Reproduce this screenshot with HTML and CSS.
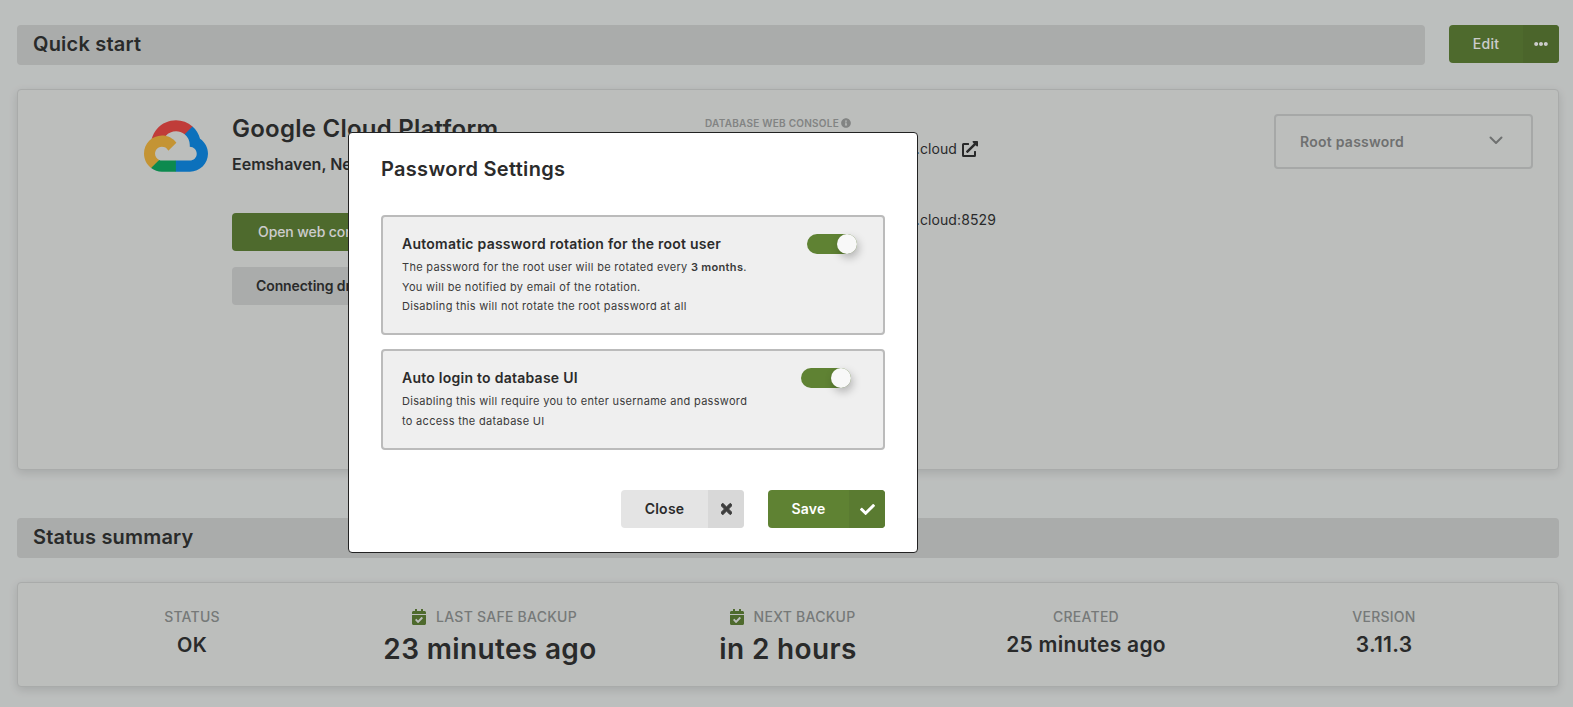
FILE: index.html
```html
<!DOCTYPE html>
<html lang="en">
<head>
    <meta charset="UTF-8">
    <meta name="viewport" content="width=device-width, initial-scale=1.0">
    <title>Deployment overview</title>
    <link rel="stylesheet" href="styles.css">
</head>
<body>
    <div class="page">
        <!-- Quick start -->
        <div class="section-row">
            <h2 class="section-title">Quick start</h2>
            <div class="btn-group btn-green top-action">
                <span class="btn-label">Edit</span>
                <span class="btn-icon">
                    <svg class="icon-dots" viewBox="0 0 512 512"><path d="M328 256c0 39.8-32.2 72-72 72s-72-32.2-72-72 32.2-72 72-72 72 32.2 72 72zm104-72c-39.8 0-72 32.2-72 72s32.2 72 72 72 72-32.2 72-72-32.2-72-72-72zm-352 0c-39.8 0-72 32.2-72 72s32.2 72 72 72 72-32.2 72-72-32.2-72-72-72z"/></svg>
                </span>
            </div>
        </div>

        <div class="card quick-card">
            <svg class="cloud-logo" viewBox="0 0 256 206">
                <path fill="#f04c48" d="M170.25 56.82l22.25-22.25 1.48-9.37C153.44-11.68 88.98-7.5 52.42 33.92 42.27 45.42 34.73 59.76 30.72 74.57l7.97-1.12 44.5-7.34 3.44-3.51c19.8-21.74 53.27-24.67 76.13-6.17l7.49.39z"/>
                <path fill="#0f8eec" d="M224.2 73.92c-5.11-18.84-15.61-35.77-30.22-48.72l-31.23 31.23c13.19 10.78 20.7 27.01 20.38 44.04v5.54c15.35 0 27.8 12.45 27.8 27.8 0 15.35-12.45 27.49-27.8 27.49h-55.67l-5.46 5.93v33.34l5.46 5.23h55.67c39.93.31 72.55-31.5 72.86-71.42.19-24.2-11.74-46.89-31.79-60.46"/>
                <path fill="#10ad63" d="M71.87 205.8h55.59v-44.51H71.87c-3.96 0-7.8-.85-11.4-2.5l-7.89 2.42-22.41 22.25-1.95 7.58c12.57 9.49 27.9 14.82 43.65 14.76"/>
                <path fill="#f5b941" d="M71.87 61.43C31.94 61.66-.23 94.22.01 134.15c.13 22.3 10.55 43.29 28.21 56.89l32.25-32.25c-13.99-6.32-20.21-22.79-13.89-36.78 6.32-13.99 22.79-20.21 36.78-13.89 6.16 2.78 11.1 7.72 13.88 13.89l32.25-32.25C115.77 71.83 94.45 61.34 71.87 61.43"/>
            </svg>
            <div class="provider">
                <h3 class="provider-name">Google Cloud Platform</h3>
                <div class="provider-region">Eemshaven, Netherlands</div>
                <div class="provider-actions">
                    <div class="btn btn-green-dim">Open web console</div>
                    <div class="btn btn-grey-dim">Connecting drivers</div>
                </div>
            </div>
            <div class="endpoints">
                <div class="field-label">
                    DATABASE WEB CONSOLE
                    <svg class="icon-info" viewBox="0 0 512 512"><path d="M256 8C119.043 8 8 119.083 8 256c0 136.997 111.043 248 248 248s248-111.003 248-248C504 119.083 392.957 8 256 8zm0 110c23.196 0 42 18.804 42 42s-18.804 42-42 42-42-18.804-42-42 18.804-42 42-42zm56 254c0 6.627-5.373 12-12 12h-88c-6.627 0-12-5.373-12-12v-24c0-6.627 5.373-12 12-12h12v-64h-12c-6.627 0-12-5.373-12-12v-24c0-6.627 5.373-12 12-12h64c6.627 0 12 5.373 12 12v100h12c6.627 0 12 5.373 12 12v24z"/></svg>
                </div>
                <div class="field-value">
                    https://5c7e2f9a1d04.arangodb.cloud
                    <svg class="icon-link" viewBox="0 0 512 512"><path d="M432 320h-32a16 16 0 0 0-16 16v112H64V128h144a16 16 0 0 0 16-16V80a16 16 0 0 0-16-16H48a48 48 0 0 0-48 48v352a48 48 0 0 0 48 48h352a48 48 0 0 0 48-48V336a16 16 0 0 0-16-16zM488 0H360c-21.37 0-32.05 25.91-17 41l35.73 35.73L135 320.37a24 24 0 0 0 0 34L157.67 377a24 24 0 0 0 34 0l243.61-243.68L471 169c15 15 41 4.5 41-17V24a24 24 0 0 0-24-24z"/></svg>
                </div>
                <div class="field-label field-gap">DATABASE ENDPOINT</div>
                <div class="field-value">https://5c7e2f9a1d04.arangodb.cloud:8529</div>
            </div>
            <div class="select-box">
                <span>Root password</span>
                <svg class="icon-chevron" viewBox="0 0 14 9"><polyline points="1.5,1.5 7,7 12.5,1.5"/></svg>
            </div>
        </div>

        <!-- Status summary -->
        <div class="section-row status-row">
            <h2 class="section-title">Status summary</h2>
        </div>

        <div class="card status-card">
            <div class="stat">
                <div class="stat-label">Status</div>
                <div class="stat-value">OK</div>
            </div>
            <div class="stat">
                <div class="stat-label stat-label-icon">
                    <svg class="icon-cal" viewBox="0 0 448 512"><path d="M436 160H12c-6.6 0-12-5.4-12-12v-36c0-26.5 21.5-48 48-48h48V12c0-6.6 5.4-12 12-12h40c6.6 0 12 5.4 12 12v52h128V12c0-6.6 5.4-12 12-12h40c6.6 0 12 5.4 12 12v52h48c26.5 0 48 21.5 48 48v36c0 6.6-5.4 12-12 12zM12 192h424c6.6 0 12 5.4 12 12v260c0 26.5-21.5 48-48 48H48c-26.5 0-48-21.5-48-48V204c0-6.6 5.4-12 12-12zm333.3 95.9l-28.2-28.4c-4.7-4.7-12.2-4.7-17-.1L194.3 364.7l-45.8-46.2c-4.7-4.7-12.2-4.7-17-.1l-28.4 28.2c-4.7 4.7-4.7 12.2-.1 17l82.6 83.2c4.7 4.7 12.2 4.7 17 .1l141.6-140.8c4.7-4.7 4.7-12.3.1-17z"/></svg>
                    Last safe backup
                </div>
                <div class="stat-value stat-large">23 minutes ago</div>
            </div>
            <div class="stat">
                <div class="stat-label stat-label-icon">
                    <svg class="icon-cal" viewBox="0 0 448 512"><path d="M436 160H12c-6.6 0-12-5.4-12-12v-36c0-26.5 21.5-48 48-48h48V12c0-6.6 5.4-12 12-12h40c6.6 0 12 5.4 12 12v52h128V12c0-6.6 5.4-12 12-12h40c6.6 0 12 5.4 12 12v52h48c26.5 0 48 21.5 48 48v36c0 6.6-5.4 12-12 12zM12 192h424c6.6 0 12 5.4 12 12v260c0 26.5-21.5 48-48 48H48c-26.5 0-48-21.5-48-48V204c0-6.6 5.4-12 12-12zm333.3 95.9l-28.2-28.4c-4.7-4.7-12.2-4.7-17-.1L194.3 364.7l-45.8-46.2c-4.7-4.7-12.2-4.7-17-.1l-28.4 28.2c-4.7 4.7-4.7 12.2-.1 17l82.6 83.2c4.7 4.7 12.2 4.7 17 .1l141.6-140.8c4.7-4.7 4.7-12.3.1-17z"/></svg>
                    Next backup
                </div>
                <div class="stat-value stat-large">in 2 hours</div>
            </div>
            <div class="stat">
                <div class="stat-label">Created</div>
                <div class="stat-value stat-medium">25 minutes ago</div>
            </div>
            <div class="stat">
                <div class="stat-label">Version</div>
                <div class="stat-value stat-medium">3.11.3</div>
            </div>
        </div>
    </div>

    <!-- Password settings dialog -->
    <div class="overlay">
        <div class="modal">
            <h2 class="modal-title">Password Settings</h2>

            <div class="option">
                <div class="option-text">
                    <div class="option-title">Automatic password rotation for the root user</div>
                    <p>The password for the root user will be rotated every <strong>3 months</strong>.</p>
                    <p>You will be notified by email of the rotation.</p>
                    <p>Disabling this will not rotate the root password at all</p>
                </div>
                <div class="toggle"><span class="thumb"></span></div>
            </div>

            <div class="option option-second">
                <div class="option-text">
                    <div class="option-title">Auto login to database UI</div>
                    <p>Disabling this will require you to enter username and password</p>
                    <p>to access the database UI</p>
                </div>
                <div class="toggle toggle-second"><span class="thumb"></span></div>
            </div>

            <div class="modal-actions">
                <div class="btn-group btn-light btn-close">
                    <span class="btn-label">Close</span>
                    <span class="btn-icon">
                        <svg class="icon-times" viewBox="0 0 352 512"><path d="M242.72 256l100.07-100.07c12.28-12.28 12.28-32.19 0-44.48l-22.24-22.24c-12.28-12.28-32.19-12.28-44.48 0L176 189.28 75.93 89.21c-12.28-12.28-32.19-12.28-44.48 0L9.21 111.45c-12.28 12.28-12.28 32.19 0 44.48L109.28 256 9.21 356.07c-12.28 12.28-12.28 32.19 0 44.48l22.24 22.24c12.28 12.28 32.2 12.28 44.48 0L176 322.72l100.07 100.07c12.28 12.28 32.2 12.28 44.48 0l22.24-22.24c12.28-12.28 12.28-32.19 0-44.48L242.72 256z"/></svg>
                    </span>
                </div>
                <div class="btn-group btn-save">
                    <span class="btn-label">Save</span>
                    <span class="btn-icon">
                        <svg class="icon-check" viewBox="0 0 512 512"><path d="M173.898 439.404l-166.4-166.4c-9.997-9.997-9.997-26.206 0-36.204l36.203-36.204c9.997-9.998 26.207-9.998 36.204 0L192 312.69 432.095 72.596c9.997-9.997 26.207-9.997 36.204 0l36.203 36.204c9.997 9.997 9.997 26.206 0 36.204l-294.4 294.401c-9.998 9.997-26.207 9.997-36.204-.001z"/></svg>
                    </span>
                </div>
            </div>
        </div>
    </div>
</body>
</html>
```

FILE: styles.css
```css
* {
    box-sizing: border-box;
}
html, body {
    margin: 0;
    height: 100%;
    overflow: hidden;
}
body {
    font-family: Inter, "Liberation Sans", sans-serif;
    letter-spacing: 0.25px;
    color: #343535;
    background-color: #ecefee;
}
svg {
    fill: currentColor;
    display: block;
}
.page {
    padding: 25px 14px 0 17px;
}

/* section headers */
.section-row {
    display: flex;
    gap: 24px;
    align-items: flex-start;
}
.status-row {
    margin-top: 48px;
}
.section-title {
    flex: 1;
    height: 40px;
    margin: 0;
    padding: 0 16px;
    line-height: 38px;
    font-size: 20px;
    font-weight: 600;
    letter-spacing: 0.2px;
    background-color: #d5d7d6;
    border-radius: 4px;
}

/* split buttons */
.btn-group {
    display: flex;
    height: 38px;
    border-radius: 4px;
    overflow: hidden;
    font-size: 14px;
    font-weight: 600;
    line-height: 38px;
    text-align: center;
}
.btn-label {
    flex: 1;
}
.btn-icon {
    display: flex;
    align-items: center;
    justify-content: center;
}
.btn-green {
    width: 110px;
    color: #fff;
    background-color: #628539;
}
.btn-green .btn-label {
    font-weight: 500;
}
.btn-green .btn-icon {
    width: 36px;
    background-color: #5e7f36;
}
.icon-dots {
    width: 14px;
    height: 14px;
}

/* cards */
.card {
    background-color: #ebeeec;
    border: 1px solid #d4d6d5;
    border-radius: 4px;
    box-shadow: 0 3px 10px rgba(0, 0, 0, 0.12);
}
.quick-card {
    display: grid;
    grid-template-columns: 88px 473px 1fr 259px;
    height: 381px;
    margin-top: 24px;
    padding: 24px 25px 0 126px;
}
.cloud-logo {
    width: 64px;
    height: 52px;
    margin-top: 6px;
}
.provider-name {
    margin: -1px 0 0;
    font-size: 24px;
    font-weight: 600;
    line-height: 32px;
}
.provider-region {
    margin-top: 8px;
    font-size: 16px;
    font-weight: 600;
    line-height: 22px;
    letter-spacing: 0;
}
.provider-actions {
    display: flex;
    flex-direction: column;
    align-items: flex-start;
    gap: 16px;
    margin-top: 38px;
}
.btn {
    height: 38px;
    padding: 0 26px;
    font-size: 14px;
    line-height: 38px;
    letter-spacing: -0.1px;
    border-radius: 4px;
}
.btn-green-dim {
    color: #fff;
    font-weight: 500;
    background-color: #628539;
}
.btn-grey-dim {
    padding: 0 24px;
    font-weight: 600;
    background-color: #d5d7d6;
}
.field-label {
    display: flex;
    align-items: center;
    gap: 2px;
    font-size: 10px;
    font-weight: 600;
    line-height: 18px;
    color: #a3a5a4;
}
.field-gap {
    margin-top: 26px;
}
.icon-info {
    width: 10px;
    height: 10px;
}
.field-value {
    display: flex;
    align-items: center;
    gap: 5px;
    margin-top: 7px;
    font-size: 14px;
    line-height: 20px;
    letter-spacing: 0.1px;
    white-space: nowrap;
}
.icon-link {
    width: 16px;
    height: 16px;
}
.select-box {
    display: flex;
    align-items: center;
    justify-content: space-between;
    height: 55px;
    padding: 0 28px 0 24px;
    font-size: 14px;
    font-weight: 600;
    color: #8b8d8c;
    border: 2px solid #d0d2d1;
    border-radius: 4px;
}
.icon-chevron {
    width: 14px;
    height: 9px;
    margin-top: -3px;
    fill: none;
    stroke: currentColor;
    stroke-width: 2;
    stroke-linecap: round;
    stroke-linejoin: round;
}

/* status summary */
.status-card {
    display: grid;
    grid-template-columns: repeat(5, 1fr);
    height: 105px;
    margin-top: 24px;
    padding: 24px 25px 0;
    text-align: center;
}
.stat-label {
    display: flex;
    align-items: center;
    justify-content: center;
    gap: 8px;
    font-size: 14px;
    font-weight: 500;
    line-height: 20px;
    color: #949897;
    text-transform: uppercase;
}
.stat-label-icon {
    gap: 10px;
    padding-left: 9px;
}
.icon-cal {
    width: 14px;
    height: 16px;
    color: #628539;
}
.stat-value {
    margin-top: 4px;
    font-size: 20px;
    font-weight: 600;
    line-height: 28px;
}
.stat-medium {
    font-size: 21px;
}
.stat-large {
    margin-top: 3px;
    font-size: 28px;
    line-height: 38px;
    letter-spacing: 0.35px;
}

/* dialog */
.overlay {
    position: fixed;
    inset: 0;
    padding: 132px 0 0 348px;
    background-color: rgba(0, 0, 0, 0.2);
}
.modal {
    width: 570px;
    height: 421px;
    padding: 24px 32px 0;
    background-color: #fff;
    border: 1px solid #222;
    border-radius: 4px;
    color: #2b2b2b;
}
.modal-title {
    margin: 0;
    font-size: 20px;
    font-weight: 600;
    line-height: 24px;
    letter-spacing: 0.3px;
}
.option {
    display: flex;
    justify-content: space-between;
    height: 120px;
    margin-top: 34px;
    padding: 17px 19px 0;
    background-color: #efefef;
    border: 2px solid #bbb;
    border-radius: 4px;
}
.option-second {
    height: 101px;
    margin-top: 14px;
}
.option-title {
    font-size: 14px;
    font-weight: 600;
    line-height: 20px;
    margin-bottom: 4px;
}
.option-text p {
    margin: 0;
    font-size: 11px;
    line-height: 19.5px;
    letter-spacing: 0.31px;
    color: #3a3a3a;
}
.option-text strong {
    font-weight: 600;
}
.toggle {
    position: relative;
    flex: none;
    width: 50px;
    height: 20px;
    margin-right: 7px;
    background-color: #5f8233;
    border-radius: 10px;
}
.toggle-second {
    margin-right: 13px;
}
.thumb {
    position: absolute;
    top: 0;
    right: 0;
    width: 20px;
    height: 20px;
    background-color: #f8f8f8;
    border-radius: 50%;
    box-shadow: 2px 4px 8px rgba(0, 0, 0, 0.25);
}
.modal-actions {
    display: flex;
    justify-content: flex-end;
    gap: 24px;
    margin-top: 40px;
}
.btn-light {
    width: 123px;
    background-color: #e4e4e4;
}
.btn-light .btn-icon {
    width: 36px;
    background-color: #d8d8d8;
}
.icon-times {
    width: 11px;
    height: 16px;
    color: #3d3d3d;
    stroke: currentColor;
    stroke-width: 30;
}
.btn-save {
    width: 117px;
    color: #fff;
    background-color: #5f8233;
}
.btn-save .btn-icon {
    width: 36px;
    background-color: #5a7b31;
}
.icon-check {
    width: 15px;
    height: 15px;
}
```
